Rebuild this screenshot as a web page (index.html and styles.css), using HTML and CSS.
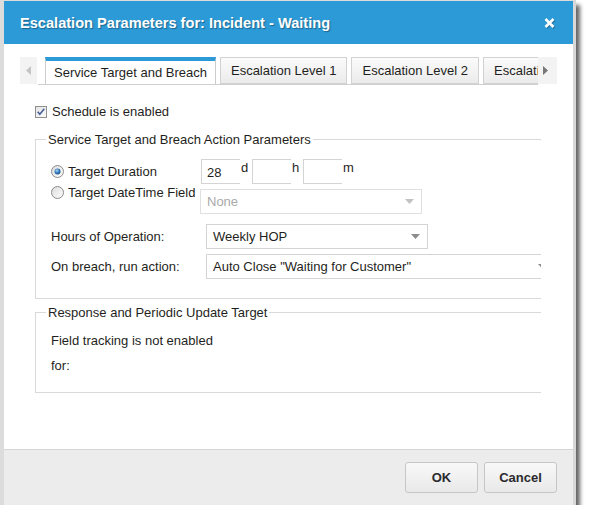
FILE: index.html
```html
<!DOCTYPE html>
<html>
<head>
<meta charset="utf-8">
<link rel="stylesheet" href="styles.css">
</head>
<body>
<div class="dialog">
  <div class="header">
    <span class="title">Escalation Parameters for: Incident - Waiting</span>
    <svg class="close" width="11" height="10" viewBox="0 0 11 10"><path d="M1.5 1 L9.5 9 M9.5 1 L1.5 9" stroke="#fff" stroke-width="2.6" fill="none"/></svg>
  </div>
  <div class="body">
    <div class="tabbar">
      <div class="scroll scroll-left"><svg width="5" height="9" viewBox="0 0 5 9"><path d="M5 0 L0 4.5 L5 9 Z" fill="#c4c4c4"/></svg></div>
      <div class="tabs">
        <div class="tab active">Service Target and Breach</div>
        <div class="tab">Escalation Level 1</div>
        <div class="tab">Escalation Level 2</div>
        <div class="tab">Escalation Level 3</div>
      </div>
      <div class="scroll scroll-right"><svg width="5" height="9" viewBox="0 0 5 9"><path d="M0 0 L5 4.5 L0 9 Z" fill="#777"/></svg></div>
    </div>
    <div class="panel">
      <div class="check-row">
        <svg class="checkbox" width="12" height="12" viewBox="0 0 12 12">
          <defs><linearGradient id="cb" x1="0" y1="0" x2="1" y2="1"><stop offset="0" stop-color="#e4e4e4"/><stop offset="1" stop-color="#fbfbfb"/></linearGradient></defs>
          <rect x="0.5" y="0.5" width="11" height="11" fill="url(#cb)" stroke="#8e8f8f"/>
          <path d="M2.7 5.8 L4.8 8.3 L9.3 2.8" stroke="#4a5f97" stroke-width="1.6" fill="none"/>
        </svg>
        <span>Schedule is enabled</span>
      </div>
      <fieldset class="group group-target">
        <legend>Service Target and Breach Action Parameters</legend>
        <div class="group-body">
          <div class="target">
            <div class="radios">
              <div class="radio-row">
                <svg class="radio" width="13" height="13" viewBox="0 0 13 13">
                  <defs>
                    <linearGradient id="rb" x1="0" y1="0" x2="1" y2="1"><stop offset="0" stop-color="#dcdcdc"/><stop offset="1" stop-color="#fdfdfd"/></linearGradient>
                    <radialGradient id="rd" cx="0.4" cy="0.35" r="0.7"><stop offset="0" stop-color="#a9d6f5"/><stop offset="0.6" stop-color="#2d73b5"/><stop offset="1" stop-color="#1b4f86"/></radialGradient>
                  </defs>
                  <circle cx="6.5" cy="6.5" r="6" fill="url(#rb)" stroke="#8a8a8a"/>
                  <circle cx="6.5" cy="6.5" r="3" fill="url(#rd)"/>
                </svg>
                <span>Target Duration</span>
              </div>
              <div class="radio-row">
                <svg class="radio" width="13" height="13" viewBox="0 0 13 13">
                  <circle cx="6.5" cy="6.5" r="6" fill="url(#rb)" stroke="#8a8a8a"/>
                </svg>
                <span>Target DateTime Field</span>
              </div>
            </div>
            <div class="controls">
              <div class="duration">
                <div class="num">28</div><span class="unit">d</span>
                <div class="num"></div><span class="unit">h</span>
                <div class="num"></div><span class="unit">m</span>
              </div>
              <div class="select select-none disabled"><span>None</span><svg class="arrow" width="9" height="5" viewBox="0 0 9 5"><path d="M0 0 H9 L4.5 5 Z" fill="#c2c2c2"/></svg></div>
            </div>
          </div>
          <div class="field-row">
            <span class="label">Hours of Operation:</span>
            <div class="select select-hop"><span>Weekly HOP</span><svg class="arrow" width="9" height="5" viewBox="0 0 9 5"><path d="M0 0 H9 L4.5 5 Z" fill="#8c8c8c"/></svg></div>
          </div>
          <div class="field-row">
            <span class="label">On breach, run action:</span>
            <div class="select select-action"><span>Auto Close "Waiting for Customer"</span><svg class="arrow" width="9" height="5" viewBox="0 0 9 5"><path d="M0 0 H9 L4.5 5 Z" fill="#8c8c8c"/></svg></div>
          </div>
        </div>
      </fieldset>
      <fieldset class="group group-response">
        <legend>Response and Periodic Update Target</legend>
        <div class="group-body">
          <p class="line">Field tracking is not enabled</p>
          <p class="line">for:</p>
        </div>
      </fieldset>
    </div>
  </div>
  <div class="footer">
    <button class="btn">OK</button>
    <button class="btn">Cancel</button>
  </div>
</div>
</body>
</html>
```

FILE: styles.css
```css
html, body {
  margin: 0;
  padding: 0;
  background: #fff;
}
body {
  font-family: "Liberation Sans", Arial, sans-serif;
  font-size: 13px;
  color: #1f1f22;
}
.dialog {
  width: 569px;
  height: 504px;
  border-top: 1px solid #dcdcdc;
  border-left: 4px solid #dcdcdc;
  border-right: 3px solid #d8d8d8;
  display: flex;
  flex-direction: column;
  background: #fff;
  box-shadow: 4px 5px 4px rgba(0, 0, 0, 0.6);
}
.header {
  height: 43px;
  flex: none;
  background: #2c9ad7;
  display: flex;
  align-items: center;
  justify-content: space-between;
  padding: 0 18px 0 16px;
}
.title {
  color: #fff;
  font-weight: bold;
  font-size: 14.6px;
  text-shadow: 1px 1px 1px rgba(0, 0, 0, 0.35);
}
.close {
  display: block;
  filter: drop-shadow(1px 1px 0 rgba(0, 0, 0, 0.25));
}
.body {
  flex: 1;
  min-height: 0;
  display: flex;
  flex-direction: column;
}
.tabbar {
  margin: 13px 16px 0 16px;
  height: 28px;
  display: flex;
}
.scroll {
  flex: none;
  height: 27px;
  background: #f3f3f3;
  display: flex;
  align-items: center;
  justify-content: center;
}
.scroll-left {
  width: 17px;
  margin-right: 1px;
}
.scroll-right {
  width: 19px;
  justify-content: flex-start;
  padding-left: 5px;
  box-sizing: border-box;
}
.tabs {
  flex: 1;
  min-width: 0;
  display: flex;
  overflow: hidden;
  padding-left: 7px;
  border-bottom: 1px solid #cfcfcf;
  box-sizing: border-box;
  height: 28px;
}
.tab {
  flex: none;
  height: 27px;
  box-sizing: border-box;
  padding: 0 10px;
  margin-right: 4px;
  border: 1px solid #d2d2d2;
  background: linear-gradient(#fbfbfb, #ebebeb);
  line-height: 25px;
  white-space: nowrap;
  font-size: 13px;
  color: #1f1f22;
}
.tab.active {
  padding: 0 8px;
  background: #fff;
  border-color: #cccccc;
  border-top: 4px solid #2c9ad7;
  border-bottom: 1px solid #fff;
  height: 28px;
  line-height: 23px;
}
.panel {
  width: 537px;
  overflow: hidden;
  padding-left: 31px;
  box-sizing: border-box;
  flex: 1;
}
.check-row {
  margin-top: 19px;
  height: 15px;
  display: flex;
  align-items: center;
  gap: 5px;
  line-height: 15px;
}
.checkbox, .radio {
  display: block;
  flex: none;
}
.group {
  margin: 13px 0 0 0;
  padding: 0;
  border: 1px solid #d9d9d9;
  width: 540px;
  min-width: 0;
  box-sizing: border-box;
}
.group legend {
  margin-left: 10px;
  padding: 0 2px;
  line-height: 15px;
  font-size: 13px;
}
.group-body {
  padding-left: 15px;
}
.group-target .group-body {
  padding-top: 12px;
  padding-bottom: 19px;
}
.target {
  display: flex;
}
.radios {
  width: 150px;
  flex: none;
  margin-top: 2px;
}
.radio-row {
  height: 21px;
  display: flex;
  align-items: center;
  gap: 4px;
  white-space: nowrap;
}
.controls {
  display: flex;
  flex-direction: column;
  gap: 5px;
}
.duration {
  display: flex;
  height: 25px;
}
.num {
  width: 39px;
  height: 25px;
  box-sizing: border-box;
  border: 1px solid #d4d4d4;
  border-right: none;
  padding-left: 5px;
  line-height: 25px;
  font-size: 13px;
}
.unit {
  width: 12px;
  padding-left: 1px;
  box-sizing: border-box;
  line-height: 13px;
  margin-top: 2px;
}
.select {
  height: 25px;
  box-sizing: border-box;
  border: 1px solid #d4d4d4;
  background: #fff;
  display: flex;
  align-items: center;
  justify-content: space-between;
  padding: 0 7px 0 6px;
  white-space: nowrap;
}
.arrow {
  display: block;
  flex: none;
}
.select-none {
  width: 222px;
  margin-left: -1px;
  color: #a9a9a9;
  border-color: #e0e0e0;
}
.field-row {
  display: flex;
  align-items: center;
  margin-top: 5px;
}
.target + .field-row {
  margin-top: 10px;
}
.label {
  width: 155px;
  flex: none;
  white-space: nowrap;
}
.select-hop {
  width: 222px;
}
.select-action {
  width: 349px;
  flex: none;
}
.group-response {
  margin-top: 6px;
}
.group-response .group-body {
  padding-top: 8px;
  padding-bottom: 14px;
}
.line {
  margin: 0;
  line-height: 25px;
}
.footer {
  height: 56px;
  flex: none;
  box-sizing: border-box;
  border-top: 1px solid #d6d6d6;
  background: #ececec;
  display: flex;
  justify-content: flex-end;
  align-items: flex-start;
  padding: 12px 16px 0 0;
  gap: 6px;
}
.btn {
  width: 73px;
  height: 31px;
  border: 1px solid #c6c6c6;
  border-radius: 3px;
  background: linear-gradient(#f8f8f8, #e9e9e9);
  font-family: "Liberation Sans", Arial, sans-serif;
  font-weight: bold;
  font-size: 13px;
  color: #2a2a2e;
  padding: 0;
}
```
